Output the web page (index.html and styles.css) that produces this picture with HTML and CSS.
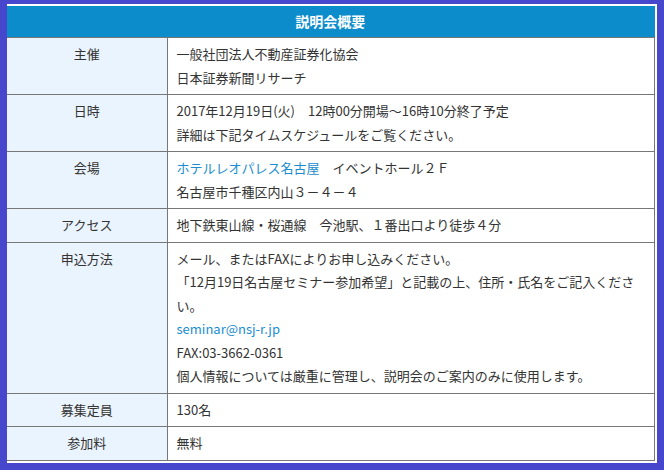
FILE: index.html
```html
<!DOCTYPE html>
<html lang="ja">
<head>
<meta charset="utf-8">
<title>説明会概要</title>
<link rel="stylesheet" href="styles.css">
</head>
<body>
<div class="frame">
  <table class="info">
    <colgroup>
      <col class="col-label">
      <col class="col-value">
    </colgroup>
    <thead>
      <tr><th class="head" colspan="2">説明会概要</th></tr>
    </thead>
    <tbody>
      <tr>
        <th class="label">主催</th>
        <td class="value">一般社団法人不動産証券化協会<br>日本証券新聞リサーチ</td>
      </tr>
      <tr>
        <th class="label">日時</th>
        <td class="value">2017年12月19日(火)　12時00分開場～16時10分終了予定<br>詳細は下記タイムスケジュールをご覧ください。</td>
      </tr>
      <tr>
        <th class="label">会場</th>
        <td class="value"><a class="link" href="#">ホテルレオパレス名古屋</a>　イベントホール２Ｆ<br>名古屋市千種区内山３－４－４</td>
      </tr>
      <tr>
        <th class="label">アクセス</th>
        <td class="value">地下鉄東山線・桜通線　今池駅、１番出口より徒歩４分</td>
      </tr>
      <tr>
        <th class="label">申込方法</th>
        <td class="value">メール、またはFAXによりお申し込みください。<br>「12月19日名古屋セミナー参加希望」と記載の上、住所・氏名をご記入ください。<br><a class="link" href="#">seminar@nsj-r.jp</a><br>FAX:03-3662-0361<br>個人情報については厳重に管理し、説明会のご案内のみに使用します。</td>
      </tr>
      <tr>
        <th class="label">募集定員</th>
        <td class="value">130名</td>
      </tr>
      <tr>
        <th class="label">参加料</th>
        <td class="value">無料</td>
      </tr>
    </tbody>
  </table>
</div>
</body>
</html>
```

FILE: styles.css
```css
html, body {
  margin: 0;
  padding: 0;
  background: #4747cd;
}
body {
  font-family: "Noto Sans CJK JP", "Noto Sans", sans-serif;
  font-size: 13px;
  color: #333333;
}
.frame {
  margin: 4px 0 0 7px;
  width: 647px;
  padding: 2px 3px 2px 0;
  background: #ffffff;
}
.info {
  width: 647px;
  border-collapse: collapse;
  table-layout: fixed;
  border-right: 1px solid #777777;
  border-bottom: 1px solid #777777;
}
.col-label {
  width: 160px;
}
.col-value {
  width: 487px;
}
.head {
  height: 31px;
  padding: 0;
  background: #0d8ccc;
  color: #ffffff;
  font-size: 14px;
  font-weight: bold;
  text-align: center;
  border-right: 1px solid #0d8ccc;
  border-bottom: 1px solid #777777;
  line-height: 31px;
}
.label {
  padding: 4px 0 5px 0;
  background: #eaf4fe;
  font-weight: normal;
  text-align: center;
  vertical-align: top;
  line-height: 23.5px;
  border-right: 1px solid #777777;
  border-bottom: 1px solid #777777;
}
.value {
  padding: 4px 9px 5px 9px;
  background: #ffffff;
  vertical-align: top;
  line-height: 23.5px;
  border-bottom: 1px solid #777777;
}
.link {
  color: #1a8dd0;
  text-decoration: none;
}
```
